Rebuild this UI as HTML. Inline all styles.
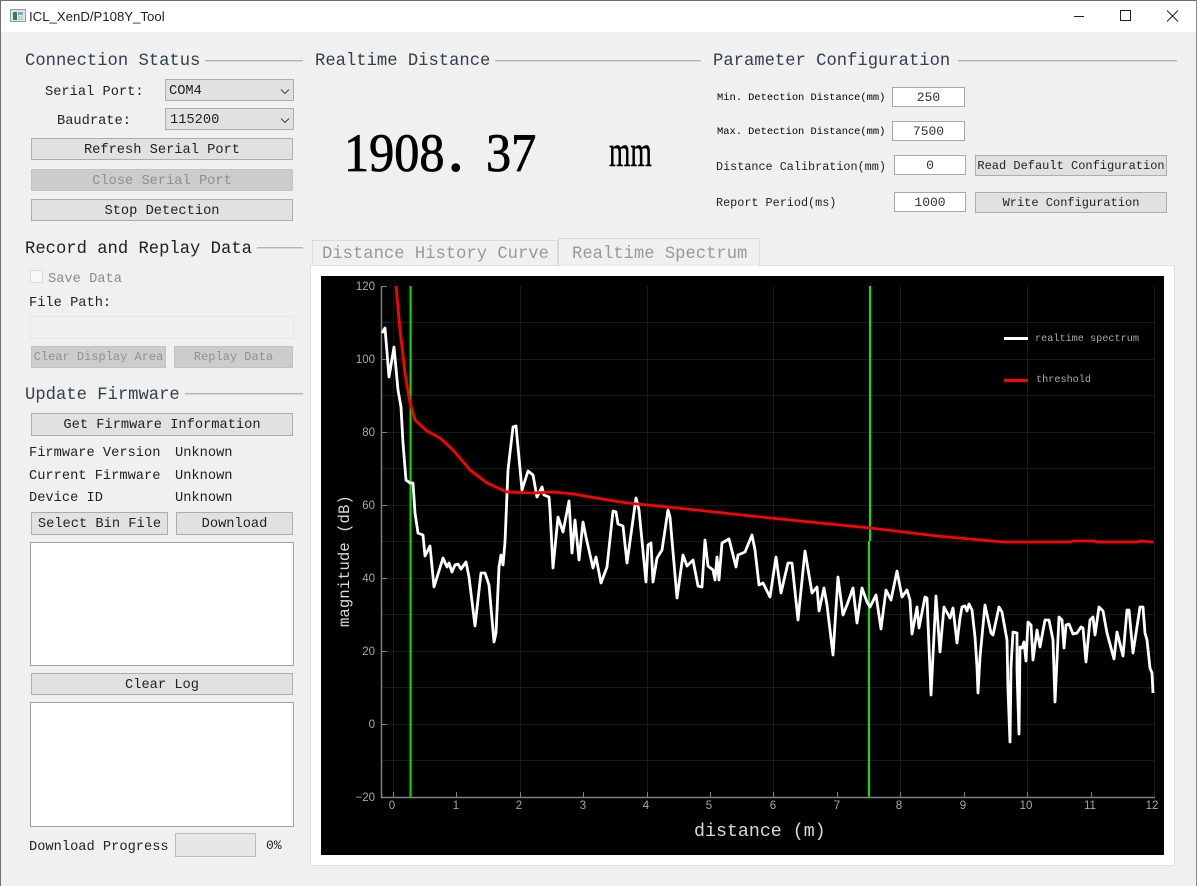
<!DOCTYPE html>
<html><head><meta charset="utf-8"><title>ICL_XenD/P108Y_Tool</title>
<style>
html,body{margin:0;padding:0;background:#f0f0f0}
#w{position:relative;width:1197px;height:886px;overflow:hidden;background:#f0f0f0;font-family:"Liberation Mono","Noto Serif CJK SC",monospace;color:#222}
.t{position:absolute;white-space:pre;line-height:20px;height:20px;font-size:13.7px;margin-top:2px}
.h{font-size:17.2px;color:#33404d}
.l{position:absolute;height:1px;background:#b4b4b4;border-bottom:1px solid #d8d8d8}
.b{position:absolute;box-sizing:border-box;background:#e1e1e1;border:1px solid #adadad;text-align:center;font-size:13.7px;white-space:pre;color:#222;padding-top:2px}
.d{background:#cccccc;border-color:#c2c2c2;color:#8f8f8f}
.s{font-size:12px;padding-top:1px}
.i{position:absolute;box-sizing:border-box;background:#fff;border:1px solid #a8a8a8;text-align:center;font-size:13px;white-space:pre;color:#333;padding-top:1px}
.box{position:absolute;box-sizing:border-box;background:#fff;border:1.5px solid #a0a0a0}
.sm{font-size:10.4px;color:#000;margin-top:1px}
.m{font-size:11.8px;color:#222;margin-top:1px}
</style></head><body>
<div id="w">
<div style="position:absolute;left:0;top:0;width:1197px;height:32px;background:#fff"></div>
<div style="position:absolute;left:0;top:0;width:1197px;height:1px;background:#6e6e6e"></div>
<div style="position:absolute;left:0;top:0;width:1px;height:886px;background:#6e6e6e"></div>
<div style="position:absolute;left:1196px;top:0;width:1px;height:886px;background:#8a8a8a"></div>
<svg style="position:absolute;left:10px;top:9px" width="16" height="14" viewBox="0 0 16 14"><rect x=".5" y=".5" width="15" height="12" fill="#dfe3e6" stroke="#9a9a9a"/><rect x="3" y="3" width="4" height="8" fill="#2f7d6e"/><rect x="8" y="3" width="5" height="3" fill="#8fa4b8"/><rect x="8" y="7" width="5" height="4" fill="#c4ccd2"/></svg>
<div class="t" style="left:29px;top:5px;font-family:'Liberation Sans',sans-serif;font-size:13.2px;color:#222">ICL_XenD/P108Y_Tool</div>
<svg style="position:absolute;left:1060px;top:0" width="130" height="32" viewBox="0 0 130 32" fill="none" stroke="#222" stroke-width="1"><path d="M14 16.5H24"/><rect x="60.5" y="10.5" width="10" height="10"/><path d="M107 10.5L118 21.5M118 10.5L107 21.5"/></svg>

<div class="t h" style="left:25px;top:50px">Connection Status</div><div class="l" style="left:205px;top:60px;width:98px"></div>
<div class="t h" style="left:315px;top:50px">Realtime Distance</div><div class="l" style="left:495px;top:60px;width:206px"></div>
<div class="t h" style="left:713px;top:50px">Parameter Configuration</div><div class="l" style="left:958px;top:60px;width:219px"></div>

<div class="t" style="left:45px;top:81px">Serial Port:</div>
<div class="t" style="left:57px;top:110px">Baudrate:</div>
<div class="b" style="left:165px;top:79px;width:129px;height:22px;text-align:left;padding-left:3px;line-height:20px">COM4</div>
<div class="b" style="left:165px;top:108px;width:129px;height:22px;text-align:left;padding-left:4px;line-height:20px">115200</div>
<svg style="position:absolute;left:280px;top:87px" width="11" height="40" fill="none" stroke="#444" stroke-width="1"><path d="M1 2.5L5 6.5L9 2.5M1 31.5L5 35.5L9 31.5"/></svg>
<div class="b" style="left:31px;top:138px;width:262px;height:22px;line-height:19px">Refresh Serial Port</div>
<div class="b d" style="left:31px;top:169px;width:262px;height:22px;line-height:19px">Close Serial Port</div>
<div class="b" style="left:31px;top:199px;width:262px;height:22px;line-height:20px">Stop Detection</div>

<div class="t h" style="left:25px;top:238px;color:#222">Record and Replay Data</div><div class="l" style="left:257px;top:247px;width:46px"></div>
<div style="position:absolute;box-sizing:border-box;left:30px;top:270px;width:13px;height:13px;background:#f8f8f8;border:1px solid #dcdcdc"></div>
<div class="t" style="left:48px;top:268px;color:#8a8a8a">Save Data</div>
<div class="t" style="left:29px;top:292px">File Path:</div>
<div style="position:absolute;box-sizing:border-box;left:30px;top:316px;width:264px;height:23px;background:#f0f0f0;border:1.5px solid #e6e6e6"></div>
<div class="b d s" style="left:31px;top:346px;width:135px;height:22px;line-height:19px">Clear Display Area</div>
<div class="b d s" style="left:174px;top:346px;width:119px;height:22px;line-height:19px">Replay Data</div>

<div class="t h" style="left:25px;top:384px">Update Firmware</div><div class="l" style="left:185px;top:393px;width:118px"></div>
<div class="b" style="left:31px;top:413px;width:262px;height:23px;line-height:20px">Get Firmware Information</div>
<div class="t" style="left:29px;top:442px">Firmware Version</div><div class="t" style="left:175px;top:442px">Unknown</div>
<div class="t" style="left:29px;top:465px">Current Firmware</div><div class="t" style="left:175px;top:465px">Unknown</div>
<div class="t" style="left:29px;top:487px">Device ID</div><div class="t" style="left:175px;top:487px">Unknown</div>
<div class="b" style="left:31px;top:512px;width:137px;height:23px;line-height:20px">Select Bin File</div>
<div class="b" style="left:176px;top:512px;width:117px;height:23px;line-height:20px">Download</div>
<div class="box" style="left:30px;top:542px;width:264px;height:124px"></div>
<div class="b" style="left:31px;top:673px;width:262px;height:22px;line-height:20px">Clear Log</div>
<div class="box" style="left:30px;top:702px;width:264px;height:125px"></div>
<div class="t" style="left:29px;top:836px">Download Progress</div>
<div style="position:absolute;box-sizing:border-box;left:175px;top:833px;width:81px;height:24px;background:#e6e6e6;border:1px solid #bcbcbc"></div>
<div class="t" style="left:266px;top:834px;font-size:13px">0%</div>

<div style="position:absolute;left:344px;top:121px;font:54px/64px 'Liberation Serif',serif;color:#000;transform:scaleX(.93);transform-origin:left;-webkit-text-stroke:.8px #000;white-space:pre">1908</div>
<div style="position:absolute;left:449px;top:121px;font:bold 54px/64px 'Liberation Serif',serif;color:#000;white-space:pre">.</div>
<div style="position:absolute;left:486px;top:121px;font:54px/64px 'Liberation Serif',serif;color:#000;transform:scaleX(.93);transform-origin:left;-webkit-text-stroke:.8px #000;white-space:pre">37</div>
<div style="position:absolute;left:609px;top:128px;font:43px/50px 'Liberation Serif',serif;color:#000;transform:scaleX(.64);transform-origin:left;-webkit-text-stroke:.5px #000;white-space:pre">mm</div>

<div class="t sm" style="left:717px;top:87px">Min. Detection Distance(mm)</div>
<div class="i" style="left:892px;top:87px;width:73px;height:20px;line-height:18px">250</div>
<div class="t sm" style="left:717px;top:121px">Max. Detection Distance(mm)</div>
<div class="i" style="left:892px;top:121px;width:73px;height:20px;line-height:18px">7500</div>
<div class="t m" style="left:716px;top:156px">Distance Calibration(mm)</div>
<div class="i" style="left:894px;top:155px;width:72px;height:20px;line-height:18px">0</div>
<div class="b s" style="left:975px;top:155px;width:192px;height:21px;line-height:19px">Read Default Configuration</div>
<div class="t m" style="left:716px;top:192px">Report Period(ms)</div>
<div class="i" style="left:894px;top:192px;width:72px;height:20px;line-height:18px">1000</div>
<div class="b s" style="left:975px;top:192px;width:192px;height:21px;line-height:18px">Write Configuration</div>

<div style="position:absolute;box-sizing:border-box;left:312px;top:240px;width:246px;height:26px;background:#f0f0f0;border:1px solid #dadada"></div>
<div style="position:absolute;box-sizing:border-box;left:310px;top:265px;width:865px;height:601px;background:#fff;border:1px solid #e0e0e0"></div>
<div style="position:absolute;box-sizing:border-box;left:558px;top:238px;width:202px;height:28px;background:#f0f0f0;border:1px solid #dadada;border-bottom:0"></div>
<div class="t h" style="left:322px;top:243px;color:#999">Distance History Curve</div>
<div class="t h" style="left:572px;top:243px;color:#999">Realtime Spectrum</div>

<svg style="position:absolute;left:321px;top:276px" width="843" height="579" viewBox="321 276 843 579">
<rect x="321" y="276" width="843" height="579" fill="#000"/>
<g stroke="#191919" stroke-width="1" fill="none">
<path d="M381 322.5H1154M381 359.5H1154M381 395.5H1154M381 432.5H1154M381 468.5H1154M381 505.5H1154M381 541.5H1154M381 578.5H1154M381 614.5H1154M381 651.5H1154M381 687.5H1154M381 724.5H1154M381 760.5H1154"/>
<path d="M393.5 286V797M520.5 286V797M647.5 286V797M773.5 286V797M900.5 286V797M1027.5 286V797M1154.5 286V797"/>
</g>
<g stroke="#808080" fill="none">
<path d="M381.5 286V798M381 797.5H1155" stroke-width="1.5"/>
<path d="M382 286.5H387M382 359.5H387M382 432.5H387M382 505.5H387M382 578.5H387M382 651.5H387M382 724.5H387M393.5 792V797M456.5 792V797M520.5 792V797M583.5 792V797M647.5 792V797M710.5 792V797M773.5 792V797M837.5 792V797M900.5 792V797M964.5 792V797M1027.5 792V797M1091.5 792V797" stroke-width="1"/>
</g>
<path d="M410.5 286V797M870 286V541M869 541V797" stroke="#00e800" stroke-width="2" fill="none"/>
<polyline fill="none" stroke="#fff" stroke-width="2.8" stroke-linejoin="round" points="382,333 385,328 389,377 394,347 398,390 401,407 403,443 406,480 410,483 413,483 415,513 418,533 423,535 425,556 430,546 434,587 443,558 447,567 449,563 452,572 455,565 458,564 461,569 466,562 469,577 475,626 481,573 485,573 489,585 494,642 496,633 499,567 501,555 503,565 505,542 508,470 513,427 516,426 522,490 528,471 533,475 537,497 542,487 544,495 549,497 550,510 553,568 558,517 563,532 569,501 572,553 575,520 579,560 583,522 586,537 593,568 596,557 601,583 607,567 613,511 616,512 618,524 623,526 627,563 636,498 639,510 646,582 648,545 651,543 653,582 657,558 662,550 668,510 670,517 677,598 683,555 687,566 693,560 698,586 702,587 705,540 708,566 713,570 715,580 717,557 719,580 722,543 729,539 736,567 738,555 745,552 752,535 755,550 759,585 763,583 770,597 776,557 781,593 788,563 792,563 798,620 805,551 812,593 817,587 819,611 824,588 827,605 833,655 838,577 843,615 847,605 853,588 857,623 862,588 867,602 870,607 876,595 881,629 886,590 891,600 897,571 902,597 907,590 910,600 912,634 917,607 919,628 925,597 927,598 931,695 936,596 940,652 944,607 950,618 953,608 957,643 960,618 962,607 965,606 967,611 969,604 972,610 975,637 977,667 978,693 980,657 985,605 991,633 993,635 999,607 1002,612 1007,640 1008,690 1010,742 1011,667 1013,632 1017,633 1017,670 1019,734 1020,647 1022,648 1024,642 1026,661 1028,622 1031,625 1033,660 1037,630 1040,647 1045,620 1049,620 1053,640 1055,702 1059,617 1062,620 1064,648 1066,625 1069,624 1073,634 1077,633 1081,627 1083,628 1086,662 1090,620 1093,617 1095,635 1099,607 1103,611 1107,633 1114,659 1117,632 1123,656 1127,610 1129,610 1133,653 1140,607 1143,607 1145,633 1147,640 1150,668 1152,673 1153,693"/>
<polyline fill="none" stroke="#f00" stroke-width="2.8" stroke-linejoin="round" points="396,286 400,330 405,373 410,403 415,420 427,431 440,438 453,450 470,470 487,483 507,492 533,493 553,492 573,494 620,502 637,504 668,507 770,518 870,528 937,536 1003,542 1070,542 1073,541 1093,541 1098,542 1137,542 1140,541 1153,542"/>
<g font-family="'Liberation Sans',sans-serif" font-size="11.5" fill="#a8a8a8" text-anchor="end">
<text x="375" y="290">120</text><text x="375" y="363">100</text><text x="375" y="436">80</text><text x="375" y="509">60</text><text x="375" y="582">40</text><text x="375" y="655">20</text><text x="375" y="728">0</text><text x="375" y="801">−20</text>
</g>
<g font-family="'Liberation Sans',sans-serif" font-size="11.5" fill="#a8a8a8" text-anchor="middle">
<text x="392" y="809">0</text><text x="456" y="809">1</text><text x="519" y="809">2</text><text x="583" y="809">3</text><text x="646" y="809">4</text><text x="709" y="809">5</text><text x="773" y="809">6</text><text x="837" y="809">7</text><text x="899" y="809">8</text><text x="963" y="809">9</text><text x="1026" y="809">10</text><text x="1090" y="809">11</text><text x="1152" y="809">12</text>
</g>
<text x="694" y="836" font-family="'Liberation Mono',monospace" font-size="18.3" fill="#d8d8d8">distance (m)</text>
<text transform="translate(349,627) rotate(-90)" font-family="'Liberation Mono',monospace" font-size="15.7" fill="#d8d8d8">magnitude (dB)</text>
<rect x="1004" y="337" width="24" height="3" fill="#fff"/>
<rect x="1004" y="379" width="24" height="3" fill="#f00"/>
<text x="1035" y="341" font-family="'Liberation Mono',monospace" font-size="10.2" fill="#a8a8a8">realtime spectrum</text>
<text x="1036" y="382" font-family="'Liberation Mono',monospace" font-size="10.2" fill="#a8a8a8">threshold</text>
</svg>
</div>
</body></html>
